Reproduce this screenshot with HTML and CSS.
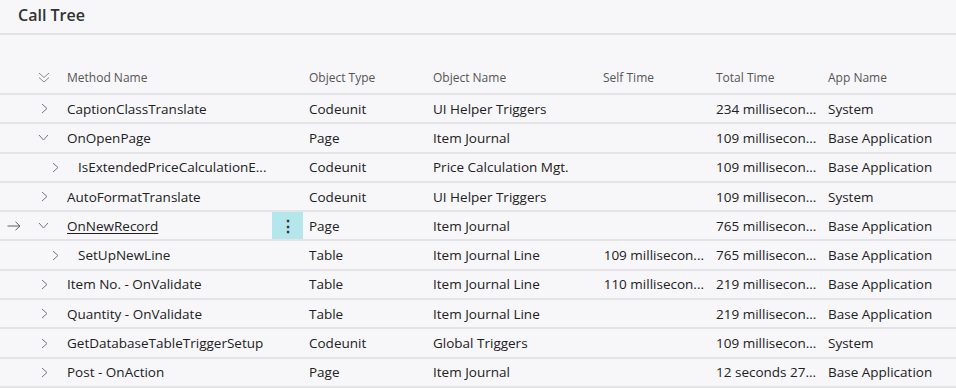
FILE: index.html
```html
<!DOCTYPE html>
<html>
<head>
<meta charset="utf-8">
<link rel="stylesheet" href="styles.css">
</head>
<body>
<div class="page">
  <div class="titlebar"><h1 class="title">Call Tree</h1></div>
  <div class="grid">
    <div class="row head">
      <div class="c-arrow"></div>
      <div class="c-method">
        <span class="chev"><svg width="12" height="11" viewBox="0 0 12 11"><path d="M1 1 L6 5.5 L11 1 M1 5.5 L6 10 L11 5.5" fill="none" stroke="#8a8a8a" stroke-width="1"/></svg></span>
        <span class="name">Method Name</span>
      </div>
      <div class="c">Object Type</div>
      <div class="c">Object Name</div>
      <div class="c">Self Time</div>
      <div class="c">Total Time</div>
      <div class="c">App Name</div>
    </div>

    <div class="row">
      <div class="c-arrow"></div>
      <div class="c-method l0"><span class="chev"><svg class="right" viewBox="0 0 7 11"><path d="M1 1 L6 5.5 L1 10" /></svg></span><span class="name">CaptionClassTranslate</span></div>
      <div class="c">Codeunit</div>
      <div class="c">UI Helper Triggers</div>
      <div class="c num"></div>
      <div class="c">234 millisecon...</div>
      <div class="c">System</div>
    </div>

    <div class="row">
      <div class="c-arrow"></div>
      <div class="c-method l0"><span class="chev"><svg class="down" viewBox="0 0 11 7"><path d="M1 1 L5.5 6 L10 1" /></svg></span><span class="name">OnOpenPage</span></div>
      <div class="c">Page</div>
      <div class="c">Item Journal</div>
      <div class="c num"></div>
      <div class="c">109 millisecon...</div>
      <div class="c">Base Application</div>
    </div>

    <div class="row">
      <div class="c-arrow"></div>
      <div class="c-method l1"><span class="chev"><svg class="right" viewBox="0 0 7 11"><path d="M1 1 L6 5.5 L1 10" /></svg></span><span class="name">IsExtendedPriceCalculationE...</span></div>
      <div class="c">Codeunit</div>
      <div class="c">Price Calculation Mgt.</div>
      <div class="c num"></div>
      <div class="c">109 millisecon...</div>
      <div class="c">Base Application</div>
    </div>

    <div class="row">
      <div class="c-arrow"></div>
      <div class="c-method l0"><span class="chev"><svg class="right" viewBox="0 0 7 11"><path d="M1 1 L6 5.5 L1 10" /></svg></span><span class="name">AutoFormatTranslate</span></div>
      <div class="c">Codeunit</div>
      <div class="c">UI Helper Triggers</div>
      <div class="c num"></div>
      <div class="c">109 millisecon...</div>
      <div class="c">System</div>
    </div>

    <div class="row current">
      <div class="c-arrow"><svg width="14" height="10" viewBox="0 0 14 10"><path d="M0.5 5 H13 M8.5 0.8 L13 5 L8.5 9.2" fill="none" stroke="#616161" stroke-width="1"/></svg></div>
      <div class="c-method l0"><span class="chev"><svg class="down" viewBox="0 0 11 7"><path d="M1 1 L5.5 6 L10 1" /></svg></span><span class="name link">OnNewRecord</span><span class="more"><span class="dots">⋮</span></span></div>
      <div class="c">Page</div>
      <div class="c">Item Journal</div>
      <div class="c num"></div>
      <div class="c">765 millisecon...</div>
      <div class="c">Base Application</div>
    </div>

    <div class="row">
      <div class="c-arrow"></div>
      <div class="c-method l1"><span class="chev"><svg class="right" viewBox="0 0 7 11"><path d="M1 1 L6 5.5 L1 10" /></svg></span><span class="name">SetUpNewLine</span></div>
      <div class="c">Table</div>
      <div class="c">Item Journal Line</div>
      <div class="c num">109 millisecon...</div>
      <div class="c">765 millisecon...</div>
      <div class="c">Base Application</div>
    </div>

    <div class="row">
      <div class="c-arrow"></div>
      <div class="c-method l0"><span class="chev"><svg class="right" viewBox="0 0 7 11"><path d="M1 1 L6 5.5 L1 10" /></svg></span><span class="name">Item No. - OnValidate</span></div>
      <div class="c">Table</div>
      <div class="c">Item Journal Line</div>
      <div class="c num">110 millisecon...</div>
      <div class="c">219 millisecon...</div>
      <div class="c">Base Application</div>
    </div>

    <div class="row">
      <div class="c-arrow"></div>
      <div class="c-method l0"><span class="chev"><svg class="right" viewBox="0 0 7 11"><path d="M1 1 L6 5.5 L1 10" /></svg></span><span class="name">Quantity - OnValidate</span></div>
      <div class="c">Table</div>
      <div class="c">Item Journal Line</div>
      <div class="c num"></div>
      <div class="c">219 millisecon...</div>
      <div class="c">Base Application</div>
    </div>

    <div class="row">
      <div class="c-arrow"></div>
      <div class="c-method l0"><span class="chev"><svg class="right" viewBox="0 0 7 11"><path d="M1 1 L6 5.5 L1 10" /></svg></span><span class="name">GetDatabaseTableTriggerSetup</span></div>
      <div class="c">Codeunit</div>
      <div class="c">Global Triggers</div>
      <div class="c num"></div>
      <div class="c">109 millisecon...</div>
      <div class="c">System</div>
    </div>

    <div class="row">
      <div class="c-arrow"></div>
      <div class="c-method l0"><span class="chev"><svg class="right" viewBox="0 0 7 11"><path d="M1 1 L6 5.5 L1 10" /></svg></span><span class="name">Post - OnAction</span></div>
      <div class="c">Page</div>
      <div class="c">Item Journal</div>
      <div class="c num"></div>
      <div class="c">12 seconds 27...</div>
      <div class="c">Base Application</div>
    </div>
  </div>
</div>
</body>
</html>
```

FILE: styles.css
```css
html, body {
  margin: 0;
  padding: 0;
  background: #f7f7f9;
}
body {
  width: 956px;
  height: 388px;
  overflow: hidden;
  font-family: "Open Sans", "Noto Sans", sans-serif;
  color: #212121;
}
.page {
  display: flex;
  flex-direction: column;
}
.titlebar {
  border-bottom: 2px solid #e2e2e4;
  box-sizing: border-box;
  height: 35px;
  padding-left: 18px;
  display: flex;
  align-items: center;
}
.title {
  margin: 0;
  margin-top: -3px;
  font-size: 16px;
  font-weight: 600;
  color: #323232;
}
.grid {
  display: flex;
  flex-direction: column;
}
.row {
  display: grid;
  grid-template-columns: 30px 273px 124px 170px 113px 112px 1fr;
  height: 29.3px;
  box-sizing: border-box;
  border-bottom: 2px solid #e4e4e6;
  align-items: center;
  font-size: 13.5px;
  white-space: nowrap;
}
.row.head {
  height: 60px;
  align-items: end;
  padding-bottom: 7px;
  font-size: 12px;
  color: #555555;
}
.row.head .c-method {
  height: auto;
  padding-left: 8px;
}
.c {
  padding-left: 6px;
  overflow: hidden;
}
.c.num {
  text-align: right;
  padding-right: 6px;
  padding-left: 0;
}
.c-arrow {
  display: flex;
  align-items: center;
  padding-left: 7px;
  height: 100%;
}
.c-method {
  display: flex;
  align-items: center;
  height: 100%;
  position: relative;
}
.c-method.l0 { padding-left: 11px; }
.c-method.l1 { padding-left: 22px; }
.chev {
  width: 26px;
  display: flex;
  align-items: center;
}
.row.head .chev { width: 29px; }
.chev svg { fill: none; stroke: #6f7780; stroke-width: 1; }
.chev svg.right { width: 7px; height: 11px; }
.chev svg.down { width: 11px; height: 7px; margin-left: -3px; }
.link { text-decoration: underline; text-underline-offset: 2px; }
.more {
  position: absolute;
  right: 0;
  top: 0;
  width: 31px;
  height: 100%;
  background: #b3e7ec;
  display: flex;
  align-items: center;
  justify-content: center;
}
.dots {
  font-size: 16px;
  font-weight: 700;
  color: #333;
}
```
